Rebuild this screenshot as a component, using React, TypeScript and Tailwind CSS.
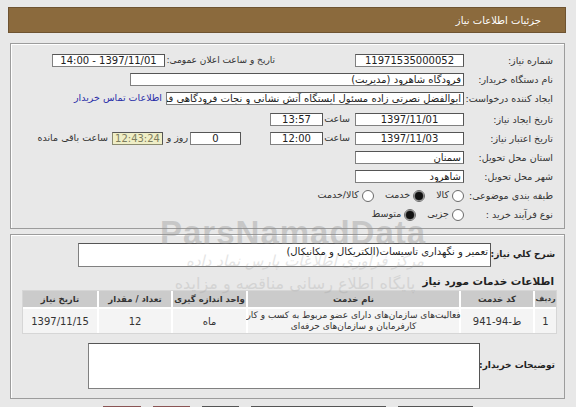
import React from "react";

function Inp({ className, children }: { className: string; children?: React.ReactNode }) {
  return (
    <div
      className={
        "h-[13px] shrink-0 overflow-hidden whitespace-nowrap border border-[#808080] border-t-[#555] border-r-[#555] bg-white px-[2px] text-[10px] leading-[11px] text-[#222] " +
        className
      }
    >
      {children}
    </div>
  );
}

function Radio({ checked }: { checked?: boolean }) {
  return (
    <span className="flex h-[12px] w-[12px] shrink-0 items-center justify-center rounded-full border border-[#6a6a6a] bg-white">
      {checked ? <span className="h-[8px] w-[8px] rounded-full bg-[#111] shadow-[0_0_0_1px_#777]" /> : null}
    </span>
  );
}

function Label({ children }: { children: React.ReactNode }) {
  return (
    <div className="w-[89px] shrink-0 whitespace-nowrap text-right text-[9.5px] leading-[12px] tracking-[-0.2px] text-[#333]">
      {children}
    </div>
  );
}

export default function App() {
  return (
    <div dir="rtl" className="relative min-h-[407px] w-[576px] overflow-hidden bg-[#e8e8e8] font-['DejaVu_Sans',sans-serif]">
      <div className="flex flex-col pt-[7px]">
        {/* header */}
        <div className="mx-[10px] ml-[8px] flex h-[26px] items-center border border-[#6e5331] bg-[#8b6a3d] pr-[24px] text-[10px] text-white">
          جزئیات اطلاعات نیاز
        </div>

        {/* box 1 */}
        <div className="mr-[11px] ml-[10px] mt-[10px] flex h-[186px] flex-col border border-[#9c9c9c] pr-[11px] pt-[7px] shadow-[inset_1px_1px_0_#fff]">
          <div className="flex h-[19px] items-center">
            <Label>شماره نیاز:</Label>
            <Inp className="w-[109px] text-center">11971535000052</Inp>
            <div className="mr-[79px] w-[111px] shrink-0 whitespace-nowrap pr-[1px] text-right text-[9px] tracking-[-0.2px] text-[#333]">
              تاریخ و ساعت اعلان عمومی:
            </div>
            <Inp className="w-[113px] text-center">1397/11/01 - 14:00</Inp>
          </div>
          <div className="flex h-[19px] items-center">
            <Label>نام دستگاه خریدار:</Label>
            <Inp className="w-[334px] text-right">فرودگاه شاهرود (مدیریت)</Inp>
          </div>
          <div className="flex h-[19px] items-center">
            <Label>ایجاد کننده درخواست:</Label>
            <Inp className="w-[298px] text-right">
              ابوالفضل نصرتی زاده مسئول ایستگاه آتش نشانی و نجات فرودگاهی فرودگاه شاهرود
            </Inp>
            <span className="mr-[4px] whitespace-nowrap text-[9.5px] text-[#2b2fa8]">اطلاعات تماس خریدار</span>
          </div>
          <div className="mt-[2px] flex h-[19px] items-center">
            <Label>تاریخ ایجاد نیاز:</Label>
            <Inp className="w-[109px] text-center">1397/11/01</Inp>
            <div className="w-[32px] shrink-0 pr-[5px] text-right text-[9.5px] text-[#333]">ساعت</div>
            <Inp className="w-[53px] text-center">13:57</Inp>
          </div>
          <div className="flex h-[19px] items-center">
            <Label>تاریخ اعتبار نیاز:</Label>
            <Inp className="w-[109px] text-center">1397/11/03</Inp>
            <div className="w-[32px] shrink-0 pr-[5px] text-right text-[9.5px] text-[#333]">ساعت</div>
            <Inp className="w-[53px] text-center">12:00</Inp>
            <Inp className="mr-[29px] w-[51px] text-center">0</Inp>
            <div className="w-[27px] shrink-0 whitespace-nowrap pr-[2px] text-right text-[9.5px] text-[#333]">روز و</div>
            <div className="h-[13px] w-[51px] shrink-0 border border-[#8a8a70] border-t-[#555] border-r-[#555] bg-[#efeec6] text-center text-[10px] leading-[11px] text-[#7d7d5e]">
              12:43:24
            </div>
            <span className="mr-[4px] whitespace-nowrap text-[9.5px] text-[#333]">ساعت باقی مانده</span>
          </div>
          <div className="flex h-[19px] items-center">
            <Label>استان محل تحویل:</Label>
            <Inp className="w-[109px] text-right">سمنان</Inp>
          </div>
          <div className="flex h-[19px] items-center">
            <Label>شهر محل تحویل:</Label>
            <Inp className="w-[109px] text-right">شاهرود</Inp>
          </div>
          <div className="flex h-[19px] items-center text-[9.5px] text-[#333]">
            <Label>طبقه بندی موضوعی:</Label>
            <Radio />
            <span className="mr-[3px]">کالا</span>
            <span className="mr-[11px]"><Radio checked /></span>
            <span className="mr-[3px]">خدمت</span>
            <span className="mr-[11px]"><Radio /></span>
            <span className="mr-[3px]">کالا/خدمت</span>
          </div>
          <div className="flex h-[19px] items-center text-[9.5px] text-[#333]">
            <Label>نوع فرآیند خرید :</Label>
            <Radio />
            <span className="mr-[3px]">جزیی</span>
            <span className="mr-[11px]"><Radio checked /></span>
            <span className="mr-[3px]">متوسط</span>
          </div>
        </div>

        {/* box 2 */}
        <div className="mr-[11px] ml-[10px] mt-[5px] flex h-[165px] flex-col border border-[#9c9c9c] pr-[7px] pt-[8px] shadow-[inset_1px_1px_0_#fff]">
          <div className="flex items-center pr-[2px]">
            <div className="w-[64px] shrink-0 whitespace-nowrap text-right text-[9px] font-bold tracking-[-0.5px] text-[#222]">
              شرح کلي نیاز:
            </div>
            <div className="h-[24px] w-[413px] shrink-0 border border-[#808080] border-t-[#555] border-r-[#555] bg-white px-[2px] pt-[2px] text-right text-[10px] leading-[12px] text-[#222]">
              تعمیر و نگهداری تاسیسات(الکتریکال و مکانیکال)
            </div>
          </div>
          <div className="mt-[6px] h-[16px] whitespace-nowrap pr-[3px] text-right text-[10.5px] font-bold leading-[16px] text-[#222]">
            اطلاعات خدمات مورد نیاز
          </div>
          <div className="mt-[1px] grid w-[535px] grid-cols-[21px_72px_211px_73px_72px_74px] gap-[2px] border border-[#d6d6d6] bg-white text-[#333]">
            <div className="flex h-[16px] items-center justify-center whitespace-nowrap bg-[#cbcbcb] text-[7.5px] font-bold tracking-[-0.4px]">ردیف</div>
            <div className="flex h-[16px] items-center justify-center whitespace-nowrap bg-[#cbcbcb] text-[8.5px] font-bold">کد خدمت</div>
            <div className="flex h-[16px] items-center justify-center whitespace-nowrap bg-[#cbcbcb] text-[8.5px] font-bold">نام خدمت</div>
            <div className="flex h-[16px] items-center justify-center whitespace-nowrap bg-[#cbcbcb] text-[8.5px] font-bold tracking-[-0.3px]">واحد اندازه گیری</div>
            <div className="flex h-[16px] items-center justify-center whitespace-nowrap bg-[#cbcbcb] text-[8.5px] font-bold">تعداد / مقدار</div>
            <div className="flex h-[16px] items-center justify-center whitespace-nowrap bg-[#cbcbcb] text-[8.5px] font-bold">تاریخ نیاز</div>
            <div className="flex h-[24px] items-center justify-center bg-[#f4f4f4] text-[10px]">1</div>
            <div className="flex h-[24px] items-center justify-center bg-[#f4f4f4] text-[10px]">ط-94-941</div>
            <div className="flex h-[24px] flex-col items-center justify-center bg-[#f4f4f4] text-center text-[9px] leading-[11px]">
              <span className="whitespace-nowrap">فعالیت‌های سازمان‌های دارای عضو مربوط به کسب و کار</span>
              <span className="whitespace-nowrap">کارفرمایان و سازمان‌های حرفه‌ای</span>
            </div>
            <div className="flex h-[24px] items-center justify-center bg-[#f4f4f4] text-[10px]">ماه</div>
            <div className="flex h-[24px] items-center justify-center bg-[#f4f4f4] text-[10px]">12</div>
            <div className="flex h-[24px] items-center justify-center bg-[#f4f4f4] text-[10px]">1397/11/15</div>
          </div>
          <div className="mt-[9px] flex items-center pr-[2px]">
            <div className="w-[75px] shrink-0 whitespace-nowrap pl-[2px] text-right text-[9px] font-bold tracking-[-0.3px] text-[#222]">
              توضیحات خریدار:
            </div>
            <div className="h-[46px] w-[392px] shrink-0 border border-[#808080] border-t-[#555] border-r-[#555] bg-white" />
          </div>
        </div>

        {/* buttons */}
        <div className="mt-[7px] flex gap-[12px] pr-[103px]">
          <div className="h-[20px] w-[75px] border border-[#555] bg-[#dfe3db]" />
          <div className="h-[20px] w-[135px] border border-[#555] bg-[#dfe3db]" />
          <div className="h-[20px] w-[37px] border border-[#555] bg-[#dfe3db]" />
          <div className="h-[20px] w-[37px] border border-[#8a5555] bg-[#ecd8d8]" />
          <div className="h-[20px] w-[38px] border border-[#8a5555] bg-[#ecd8d8]" />
        </div>
      </div>

      {/* watermark overlay */}
      <div className="pointer-events-none absolute left-[160px] top-[208px] text-[33px] font-bold tracking-[1px] text-[#8c8c8c] opacity-35 font-['Liberation_Sans',sans-serif]" dir="ltr">
        ParsNamadData
      </div>
      <div className="pointer-events-none absolute left-[180px] top-[250px] w-[250px] text-center text-[15px] italic text-[#999] opacity-25">
        مرکز فراوری اطلاعات پارس نماد داده
      </div>
      <div className="pointer-events-none absolute left-[170px] top-[272px] w-[250px] text-center text-[16px] text-[#999] opacity-25">
        پایگاه اطلاع رسانی مناقصه و مزایده
      </div>
    </div>
  );
}
